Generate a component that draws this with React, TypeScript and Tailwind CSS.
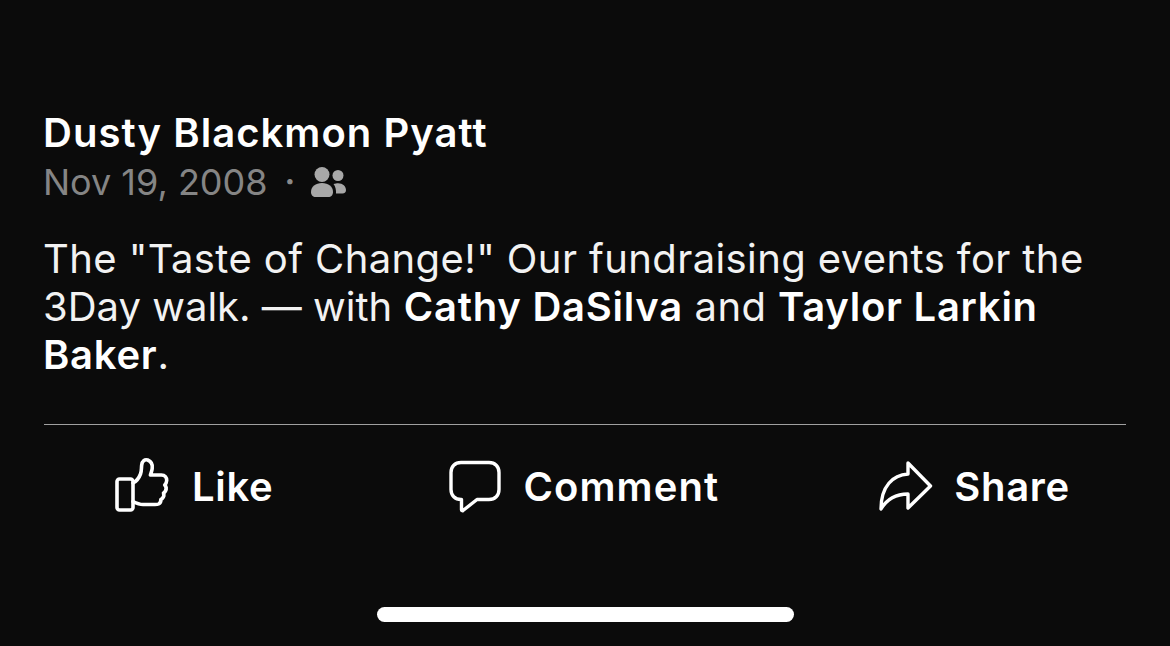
const font = { fontFamily: "Inter, 'Liberation Sans', sans-serif" };

function LikeIcon() {
  return (
    <svg width="56" height="58" viewBox="0 0 56 58" fill="none" stroke="white" strokeWidth="3.6" strokeLinejoin="round" strokeLinecap="round">
      <rect x="3" y="23" width="16" height="31" rx="2.5" />
      <path d="M19 27c4-2 6-5 7.500-9 1.200-3 .8-6 1.200-9 .5-4 3-6 6-5 3.500 1.500 5 5 4.500 8.500-.3 2.500-1.200 4.500-1.800 6.500h11c3.500 0 5.500 2.500 5.300 5.500-.1 2-1 3.500-2 4.500 1.500 1.500 1.800 4 .8 6-.5.8-1.200 1.500-2 2 .8 2 .3 4-1.200 5.500-.5.400-1 .7-1.500 1 .3 2-.5 3.500-2.300 4.500-1 .5-2 .5-3.500.5H29c-4 0-7-1.500-10-3" />
    </svg>
  );
}

function CommentIcon() {
  return (
    <svg width="54" height="54" viewBox="0 0 54 54" fill="none" stroke="white" strokeWidth="3.4" strokeLinejoin="round" strokeLinecap="round">
      <path d="M13 2.500h28c6 0 10 4 10 10v17c0 6-4 10-10 10H29L15 50.500c-.7.500-1.500 0-1.500-.8V39.500H13c-6 0-10-4-10-10v-17c0-6 4-10 10-10z" />
    </svg>
  );
}

function ShareIcon() {
  return (
    <svg width="54" height="50" viewBox="0 0 54 50" fill="none" stroke="white" strokeWidth="3.4" strokeLinejoin="round" strokeLinecap="round">
      <path d="M29 2l22.500 23L29 47V33C17 33 8 38 2 48 2 25 14 14 29 13V2z" />
    </svg>
  );
}

function PeopleIcon() {
  return (
    <svg width="35" height="30" viewBox="0 0 35 30" fill="#a8a8a8">
      <circle cx="11" cy="7.500" r="7.500" />
      <path d="M0 25c0-5.500 4.500-9 11-9s11 3.500 11 9c0 3-2 5-4.500 5h-13C2 30 0 28 0 25z" />
      <circle cx="27" cy="8.500" r="5.500" />
      <path d="M25 16.500c6-1 10 2.500 10 6.500 0 2-1.200 3.500-3.500 3.500H25c.3-3.500-.5-7-2.500-9.500.8-.3 1.600-.4 2.500-.5z" />
    </svg>
  );
}

export default function App() {
  return (
    <div className="w-[1170px] h-[646px] overflow-hidden bg-[#0b0b0b] text-white flex flex-col" style={font}>
      <div className="pt-[109px] pl-[43px] pr-[44px]">
        <div className="text-[40px] leading-[48px] font-semibold tracking-[1.05px]">Dusty Blackmon Pyatt</div>
        <div className="flex items-center h-[50px] text-[36px] text-[#858585]">
          <span>Nov 19, 2008</span>
          <span className="ml-[17px] mr-[16px] text-[32px] font-bold text-[#8a8a8a]">·</span>
          <PeopleIcon />
        </div>
        <p className="mt-[28px] text-[40px] leading-[48px] tracking-[0.4px] text-[#f2f2f2] w-[1083px]">
          The "Taste of Change!" Our fundraising events for the{" "}
          <span className="tracking-[0px]">3Day walk. — with</span>{" "}
          <span className="font-semibold tracking-[0.75px] text-white">Cathy DaSilva</span> and{" "}
          <span className="font-semibold tracking-[0.75px] text-white">Taylor Larkin Baker</span>.
        </p>
        <div className="mt-[45px] ml-px h-px bg-[#a0a0a0]" />
      </div>
      <div className="flex items-center mt-[30px] h-[64px] pl-[114px] text-[40px] font-semibold tracking-[0.7px]">
        <div className="mb-[4px]"><LikeIcon /></div>
        <span className="ml-[22px]">Like</span>
        <div className="ml-[175px]"><CommentIcon /></div>
        <span className="ml-[21px] tracking-[1.1px]">Comment</span>
        <div className="ml-[160px] mb-[3px]"><ShareIcon /></div>
        <span className="ml-[21px]">Share</span>
      </div>
      <div className="mt-[88px] ml-[377px] w-[417px] h-[15px] rounded-full bg-white" />
    </div>
  );
}
